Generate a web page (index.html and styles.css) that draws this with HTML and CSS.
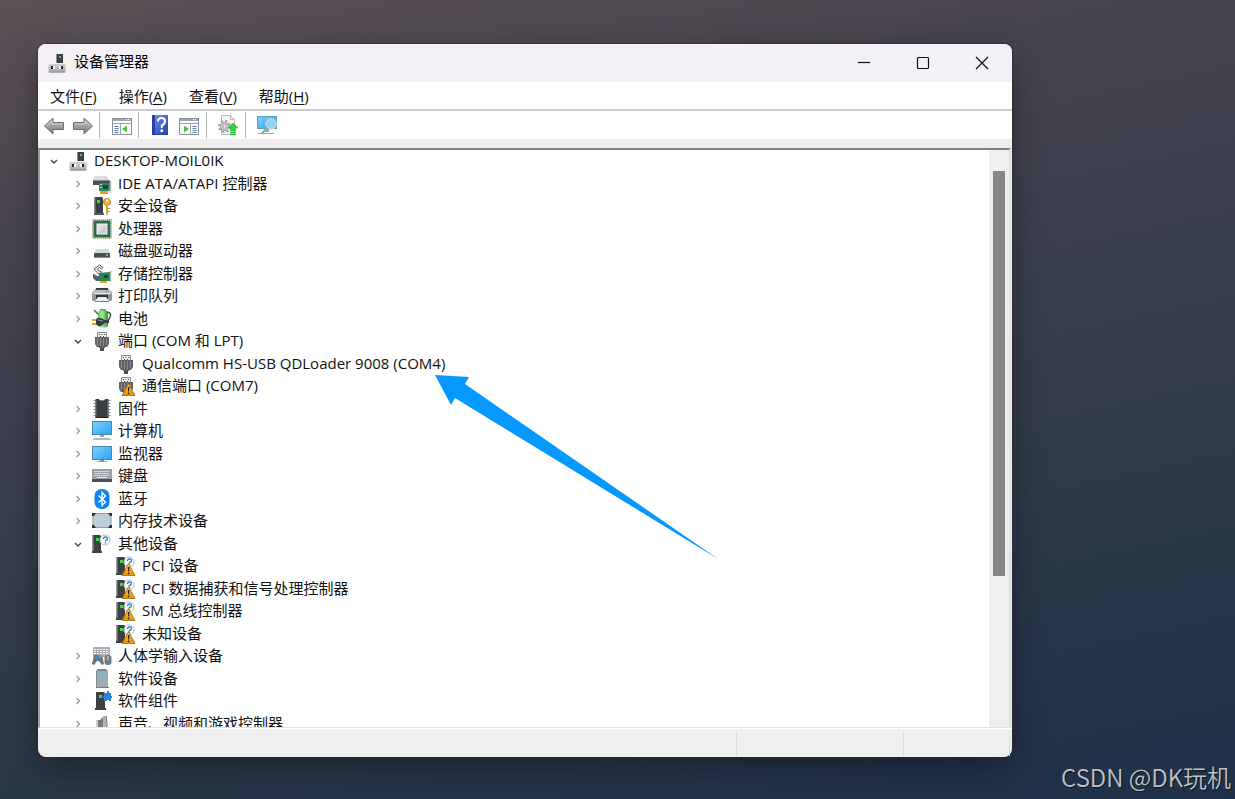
FILE: index.html
```html
<!DOCTYPE html>
<html lang="zh-CN">
<head>
<meta charset="utf-8">
<meta name="viewport" content="width=device-width, initial-scale=1">
<title>设备管理器</title>
<link rel="stylesheet" href="styles.css">
</head>
<body>
<svg class="sprite" aria-hidden="true">
  <defs>
    <linearGradient id="g-steel" x1="0" y1="0" x2="0" y2="1"><stop offset="0" stop-color="#d6d8da"/><stop offset="1" stop-color="#a3a7aa"/></linearGradient>
    <linearGradient id="g-arrow" x1="0" y1="0" x2="0" y2="1"><stop offset="0" stop-color="#c4c4c4"/><stop offset="1" stop-color="#7d7d7d"/></linearGradient>
    <linearGradient id="g-screen" x1="0" y1="0" x2="1" y2="1"><stop offset="0" stop-color="#7fd0fb"/><stop offset="1" stop-color="#2ea3f2"/></linearGradient>
    <linearGradient id="g-help" x1="0" y1="0" x2="1" y2="1"><stop offset="0" stop-color="#6b8ae6"/><stop offset="1" stop-color="#2440ae"/></linearGradient>
    <linearGradient id="g-warn" x1="0" y1="0" x2="0" y2="1"><stop offset="0" stop-color="#ffc94a"/><stop offset="1" stop-color="#e58e08"/></linearGradient>
    <linearGradient id="g-cell" x1="0" y1="0" x2="1" y2="0"><stop offset="0" stop-color="#4fcb55"/><stop offset=".4" stop-color="#a8ed9d"/><stop offset="1" stop-color="#27932f"/></linearGradient>
  </defs>
  <symbol id="right" viewBox="0 0 16 16"><path d="M6.500 5l3 3-3 3" fill="none" stroke="#9a9a9a" stroke-width="1.300"/></symbol>
  <symbol id="down" viewBox="0 0 16 16"><path d="M5 7l3 3 3-3" fill="none" stroke="#444" stroke-width="1.400"/></symbol>
  <symbol id="pc" viewBox="0 0 20 20">
    <path d="M9 1h1v10H9z" fill="#8a8e90"/><path d="M10 1h6v10h-6z" fill="#3d4144"/><rect x="12" y="3" width="2" height="2" fill="#3bdc4a"/>
    <path d="M3 10h14l1.500 2v7.500H1.500V12z" fill="url(#g-steel)"/><path d="M2 18.500h16v1H2z" fill="#8d9093"/><path d="M3 10.500h14" stroke="#efefef"/>
    <rect x="4" y="13" width="2" height="3" fill="#222"/><rect x="14" y="13" width="2" height="3" fill="#222"/><rect x="6" y="13" width="2" height="3" fill="#fff"/><rect x="12" y="13" width="2" height="3" fill="#fff"/>
  </symbol>
  <symbol id="ide" viewBox="0 0 20 20">
    <path d="M3 2h12l2 4H1z" fill="#d9dbdc"/><path d="M1 6h17v5H1z" fill="#4b4f52"/><path d="M1 6h17v1H1z" fill="#8c9092"/>
    <path d="M7 9h11v8H7z" fill="#2c8a5c"/><path d="M18.500 7v12" stroke="#b9bdbf" stroke-width="1.500"/><rect x="11" y="11" width="5" height="4" fill="#17482f"/><path d="M8 10h2v1H8zm0 3h2v1H8z" fill="#9be0b5"/><rect x="8" y="17" width="8" height="3" fill="#f29b18"/>
  </symbol>
  <symbol id="security" viewBox="0 0 20 20">
    <path d="M3 1h7l1 1v15H3z" fill="#3d4144"/><path d="M2 1h1.500v16H2z" fill="#8c8c8c"/><rect x="5" y="4" width="3" height="3" fill="#38df44"/><path d="M2 17h10v2H2z" fill="#55595b"/>
    <circle cx="15" cy="6" r="3.500" fill="#edb54b" stroke="#c08627"/><circle cx="15" cy="4.500" r="1" fill="#fff"/><path d="M14 9h2v9l-1 1-1-1z" fill="#d99e35"/><path d="M16 12h2v1h-2zm0 3h2v1h-2z" fill="#d99e35"/>
  </symbol>
  <symbol id="cpu" viewBox="0 0 20 20">
    <rect x=".75" y=".75" width="18.500" height="18.500" fill="none" stroke="#a98a3c" stroke-width="1.500" stroke-dasharray="1 1"/><rect x="1.500" y="1.500" width="17" height="17" fill="#2f6a4f"/><rect x="5" y="5" width="10" height="10" fill="#e0e2e1"/><path d="M15 5v10H5z" fill="#cdd0cf"/><rect x="5" y="5" width="10" height="10" fill="none" stroke="#f5f5f5"/>
  </symbol>
  <symbol id="disk" viewBox="0 0 20 20">
    <path d="M4 8h12l2 4H2z" fill="#d6d8d9"/><rect x="2" y="12" width="16" height="5" rx="1" fill="#4b4f51"/><path d="M2 16h16v1H2z" fill="#8c9092"/><rect x="14" y="13" width="2" height="2" fill="#3ce348"/>
  </symbol>
  <symbol id="storage" viewBox="0 0 20 20">
    <path d="M11 3.500L7.500 1 2 5l4 4.500h3V7H6.500L5.500 5l2-1.500L9.500 5z" fill="#f1f2f2" stroke="#5a5e61"/><path d="M1 10h6l4 2v5H4l-3-3z" fill="#4d6067"/><path d="M2 10h5l3 2H4z" fill="#dfe2e3"/>
    <path d="M7 9l11-1v9H7z" fill="#278650"/><path d="M18.500 7v11" stroke="#aaafb1" stroke-width="1.500"/><rect x="12" y="11" width="4" height="3" fill="#17482f"/><path d="M8 17h7v2H8z" fill="#eda11c"/>
  </symbol>
  <symbol id="printer" viewBox="0 0 20 20">
    <path d="M4 2h12l1 3H3z" fill="#3a3f43"/><path d="M2 4h16l2 3v7l-1 1H1l-1-1V7z" fill="#8f979d"/><path d="M2 4h16l1 3H1z" fill="#b9bfc4"/><path d="M1 7h18v1H1z" fill="#e3e7e9"/><rect x="13" y="5" width="4" height="1" fill="#35dc45"/><path d="M4 9h12v4H4z" fill="#2d3135"/><path d="M6 11h8l3 4H3z" fill="#eef1f2"/><path d="M3 15h14v1H3z" fill="#777e83"/>
  </symbol>
  <symbol id="battery" viewBox="0 0 20 20">
    <path d="M2 1l4 4h3" fill="none" stroke="#666" stroke-width="1.500"/><rect x="8" y="0" width="6" height="2" fill="#8c9092"/><rect x="6" y="1.500" width="10" height="17" rx="3" fill="url(#g-cell)"/><path d="M15 3q5 1 3 5l-3 6" fill="none" stroke="#454749" stroke-width="1.500"/>
    <path d="M0 10h5v2H0zm0 4h5v2H0z" fill="#dba71b"/><path d="M5 9h4l4 2h4v3h-4l-4 3H6l-2-2v-4z" fill="#3a3d40"/><path d="M6 11l5 1" stroke="#999"/>
  </symbol>
  <symbol id="port" viewBox="0 0 20 20">
    <path d="M5.500 1.500h9V7h-9z" fill="#f0f0f0" stroke="#8a8a8a"/><path d="M7 3h1v1H7zm2.500 0h1v1h-1zM12 3h1v1h-1zM8 5h1v1H8zm3 0h1v1h-1z" fill="#444"/><path d="M3 6h14v7l-2 3h-2v1H7v-1H5l-2-3z" fill="#606263"/><path d="M5.500 7v7M8.500 7v8M11.500 7v8M14.500 7v7" stroke="#898b8c"/><path d="M8 17h4v3H8z" fill="#4a4c4d"/>
  </symbol>
  <symbol id="warn" viewBox="0 0 20 20"><path d="M12.500 7.500l6.500 12H6z" fill="url(#g-warn)" stroke="#a86808" stroke-width=".8"/><path d="M11.800 11h1.600l-.3 4.500h-1z" fill="#222"/><circle cx="12.600" cy="17.300" r=".9" fill="#222"/></symbol>
  <symbol id="firmware" viewBox="0 0 20 20">
    <path d="M1.500 1.500h17M1.500 4.500h17M1.500 7.500h17M1.500 10.500h17M1.500 13.500h17M1.500 16.500h17" stroke="#85898c"/><path d="M3.500 0H7l1 2h4l1-2h3.500v19h-13z" fill="#3a3e41"/><path d="M4 1v17M16 1v17" stroke="#707477"/><path d="M3.500 18h13v1h-13z" fill="#222"/>
  </symbol>
  <symbol id="computer" viewBox="0 0 20 20">
    <rect x=".5" y=".5" width="19" height="13" fill="url(#g-screen)" stroke="#4688ad"/><path d="M8 14h4v2H8z" fill="#8fa6b3"/><path d="M3 17h14l3 2H0z" fill="#aeb9c3"/>
  </symbol>
  <symbol id="monitor" viewBox="0 0 20 20">
    <rect x=".5" y="2.500" width="19" height="13" fill="url(#g-screen)" stroke="#4688ad"/><path d="M8 16h4v1H8z" fill="#7f929e"/><path d="M5 17h10v1H5z" fill="#8fa0ab"/>
  </symbol>
  <symbol id="keyboard" viewBox="0 0 20 20">
    <rect y="3" width="20" height="10" fill="#9ba0a6"/><path d="M2 5.500h16M3 7.500h14M2 9.500h16" stroke="#eceef0" stroke-dasharray="1.500 .8"/><path d="M5 11h10v1H5z" fill="#e5e7e9"/><path d="M0 13h20v3H0z" fill="#4b5056"/>
  </symbol>
  <symbol id="bluetooth" viewBox="0 0 20 20">
    <rect x="2.500" y="0" width="15" height="20" rx="7" fill="#0a84f5"/><path d="M6.500 6.500l7 6.500-3.500 3.500V3.500L13.500 7l-7 6.500" fill="none" stroke="#fff" stroke-width="1.400"/>
  </symbol>
  <symbol id="memory" viewBox="0 0 20 20">
    <rect x="1" y="2.500" width="18" height="14" rx="1" fill="#bccfda" stroke="#8f9aa1"/><path d="M0 2h4L2 5H0zm20 0h-4l2 3h2zM0 17h4l-2-3H0zm20 0h-4l2-3h2z" fill="#333"/>
  </symbol>
  <symbol id="other" viewBox="0 0 20 20">
    <path d="M1 1h7l1 1v15H1z" fill="#3d4144"/><path d="M0 1h1.500v16H0z" fill="#9a9a9a"/><rect x="4" y="4" width="3" height="3" fill="#38df44"/><path d="M0 17h10v2H0z" fill="#3e4244"/>
    <circle cx="13" cy="6" r="5" fill="#fff" stroke="#b5bcc0"/><path d="M11.500 5q0-2 2-2t2 1.500-2 2V7.500" fill="none" stroke="#2385d0" stroke-width="1.300"/><circle cx="13.500" cy="9" r=".8" fill="#2385d0"/>
  </symbol>
  <symbol id="hid" viewBox="0 0 20 20">
    <rect x="1" y="1" width="17" height="10" fill="#aab0b6"/><path d="M2 3.500h15M2 5.500h15M2 7.500h15" stroke="#f2f4f5" stroke-dasharray="2 1"/><path d="M2 9h8l2 9-2 1-3-4H5l-3 4-2-1z" fill="#6b7379"/><circle cx="4.500" cy="11" r="2" fill="#258ddf"/><circle cx="8.500" cy="10" r="1.500" fill="#d79353"/><rect x="12.500" y="9" width="7" height="10" rx="3" fill="#737a80"/><path d="M16 10v4" stroke="#eef"/>
  </symbol>
  <symbol id="soft" viewBox="0 0 20 20">
    <path d="M6 0h8l2 2v17H4V2z" fill="#7e898f"/><path d="M5 2h11v16H5z" fill="#a0aab0"/><circle cx="10" cy="7" r="2" fill="#38d4ec"/><path d="M4 18h13v1H4z" fill="#6f7a80"/>
  </symbol>
  <symbol id="component" viewBox="0 0 20 20">
    <path d="M4 1h8l1 1v15H4z" fill="#3d4144"/><rect x="7" y="4" width="3" height="3" fill="#38df44"/><path d="M3 17h11v2H3z" fill="#3e4244"/><path d="M12 2h3V0h2v2h2v3h1v2h-1v3h-2V9h-2v1h-3V7h-1V5h1z" fill="#2687d6"/>
  </symbol>
  <symbol id="sound" viewBox="0 0 20 20">
    <path d="M4 6h4l4-4v17l-4-4H4z" fill="#757b80"/><path d="M4 6h2v9H4z" fill="#c8cdd0"/><path d="M11 2h3v17h-3z" fill="#b1b6ba"/><path d="M14 2q2 8 0 17" fill="none" stroke="#5e6367"/>
  </symbol>
  <symbol id="t-back" viewBox="0 0 22 22"><path d="M1.500 11L10 3v4.500h10.500v7H10V19z" fill="url(#g-arrow)" stroke="#6c6c6c"/><path d="M4 11l5-5v3h10" fill="none" stroke="#d5d5d5"/></symbol>
  <symbol id="t-forward" viewBox="0 0 22 22"><path d="M20.500 11L12 3v4.500H1.500v7H12V19z" fill="url(#g-arrow)" stroke="#6c6c6c"/><path d="M3 9h10V6l5 5" fill="none" stroke="#d5d5d5"/></symbol>
  <symbol id="t-tree" viewBox="0 0 22 22"><rect x="1.500" y="3.500" width="19" height="16" fill="#fafafa" stroke="#8b9095"/><path d="M2 4h18v2H2z" fill="#9fa7b0"/><path d="M15 4.500h4" stroke="#fff" stroke-dasharray="1 1"/><path d="M2 8.500h18M9.500 9v10" stroke="#9da3a8"/><path d="M3.500 11.500h4M3.500 13.500h4M3.500 15.500h4M3.500 17.500h4" stroke="#5a7fb4"/><path d="M16 10.500v7L11 14z" fill="#4cc23a"/></symbol>
  <symbol id="t-help" viewBox="0 0 22 22"><rect x="2" y="0" width="16" height="20" fill="#2541a8"/><path d="M5 0h13v19H5z" fill="url(#g-help)"/><path d="M8 6.500Q8 3 11.500 3T15 6t-3.200 4.500V13" fill="none" stroke="#fff" stroke-width="2"/><rect x="10.500" y="14.500" width="2.500" height="2.500" fill="#fff"/></symbol>
  <symbol id="t-action" viewBox="0 0 22 22"><rect x=".5" y="3.500" width="19" height="16" fill="#fafafa" stroke="#8b9095"/><path d="M1 4h18v2H1z" fill="#9fa7b0"/><path d="M14 4.500h4" stroke="#fff" stroke-dasharray="1 1"/><path d="M1 8.500h18M11.500 9v10" stroke="#9da3a8"/><path d="M13.500 11.500h4M13.500 13.500h4M13.500 15.500h4M13.500 17.500h4" stroke="#5a7fb4"/><path d="M5 10.500v7l5-3.500z" fill="#4cc23a"/></symbol>
  <symbol id="t-update" viewBox="0 0 22 22"><path d="M3.500.5h9l4 4v15h-13z" fill="#f5f5f5" stroke="#bcbcbc"/><path d="M12.500.5v4h4" fill="none" stroke="#bcbcbc"/><circle cx="6.500" cy="11.500" r="5.500" fill="none" stroke="#9b9fa3" stroke-width="2" stroke-dasharray="2.300 2"/><circle cx="6.500" cy="11.500" r="4" fill="#d4d7da" stroke="#8e9296"/><circle cx="6.500" cy="11.500" r="1.700" fill="#fff" stroke="#8e9296"/><path d="M15 8l5 5h-2.500v3h-5v-3H10zM12.500 17h5v1h-5zM12.500 19h5v1h-5z" fill="#2fd137" stroke="#26a82c" stroke-width=".5"/></symbol>
  <symbol id="t-scan" viewBox="0 0 22 22"><rect x=".5" y="1.500" width="19" height="12" fill="url(#g-screen)" stroke="#5a9fc4"/><path d="M8 14h4v3H8zM1 18h16v1H1z" fill="#8fa3b0"/><circle cx="14" cy="9" r="5" fill="#8fd2f7" stroke="#c8d4dc" stroke-width="1.500"/><path d="M10.500 13L5 18" stroke="#8fa3b0" stroke-width="2"/></symbol>
</svg>

<main class="window">
  <header class="titlebar">
    <svg class="icon"><use href="#pc"/></svg>
    <h1 class="title">设备管理器</h1>
    <div class="controls">
      <button class="control" aria-label="最小化"><svg class="glyph" viewBox="0 0 14 14"><path d="M1 6.500h12"/></svg></button>
      <button class="control" aria-label="最大化"><svg class="glyph" viewBox="0 0 14 14"><rect x="1.500" y="1.500" width="11" height="11" rx="1"/></svg></button>
      <button class="control" aria-label="关闭"><svg class="glyph" viewBox="0 0 14 14"><path d="M1 1l12 12M13 1L1 13"/></svg></button>
    </div>
  </header>
  <nav class="menubar">
    <button class="menu">文件(<u>F</u>)</button>
    <button class="menu">操作(<u>A</u>)</button>
    <button class="menu">查看(<u>V</u>)</button>
    <button class="menu">帮助(<u>H</u>)</button>
  </nav>
  <div class="toolbar" role="toolbar">
    <div class="group">
      <button class="tool" aria-label="后退"><svg><use href="#t-back"/></svg></button>
      <button class="tool" aria-label="前进"><svg><use href="#t-forward"/></svg></button>
    </div>
    <div class="group">
      <button class="tool" aria-label="显示/隐藏控制台树"><svg><use href="#t-tree"/></svg></button>
    </div>
    <div class="group">
      <button class="tool" aria-label="帮助"><svg><use href="#t-help"/></svg></button>
      <button class="tool" aria-label="显示/隐藏操作窗格"><svg><use href="#t-action"/></svg></button>
    </div>
    <div class="group">
      <button class="tool" aria-label="更新驱动程序"><svg><use href="#t-update"/></svg></button>
    </div>
    <div class="group">
      <button class="tool" aria-label="扫描检测硬件改动"><svg><use href="#t-scan"/></svg></button>
    </div>
  </div>
  <section class="pane">
    <ul class="tree" role="tree">
      <li class="node root" role="treeitem" aria-level="1"><svg class="chevron"><use href="#down"/></svg><svg class="icon"><use href="#pc"/></svg><span class="label">DESKTOP-MOIL0IK</span></li>
      <li class="node" role="treeitem" aria-level="2"><svg class="chevron"><use href="#right"/></svg><svg class="icon"><use href="#ide"/></svg><span class="label">IDE ATA/ATAPI 控制器</span></li>
      <li class="node" role="treeitem" aria-level="2"><svg class="chevron"><use href="#right"/></svg><svg class="icon"><use href="#security"/></svg><span class="label">安全设备</span></li>
      <li class="node" role="treeitem" aria-level="2"><svg class="chevron"><use href="#right"/></svg><svg class="icon"><use href="#cpu"/></svg><span class="label">处理器</span></li>
      <li class="node" role="treeitem" aria-level="2"><svg class="chevron"><use href="#right"/></svg><svg class="icon"><use href="#disk"/></svg><span class="label">磁盘驱动器</span></li>
      <li class="node" role="treeitem" aria-level="2"><svg class="chevron"><use href="#right"/></svg><svg class="icon"><use href="#storage"/></svg><span class="label">存储控制器</span></li>
      <li class="node" role="treeitem" aria-level="2"><svg class="chevron"><use href="#right"/></svg><svg class="icon"><use href="#printer"/></svg><span class="label">打印队列</span></li>
      <li class="node" role="treeitem" aria-level="2"><svg class="chevron"><use href="#right"/></svg><svg class="icon"><use href="#battery"/></svg><span class="label">电池</span></li>
      <li class="node" role="treeitem" aria-level="2"><svg class="chevron"><use href="#down"/></svg><svg class="icon"><use href="#port"/></svg><span class="label">端口 (COM 和 LPT)</span></li>
      <li class="node leaf" role="treeitem" aria-level="3"><svg class="icon"><use href="#port"/></svg><span class="label">Qualcomm HS-USB QDLoader 9008 (COM4)</span></li>
      <li class="node leaf" role="treeitem" aria-level="3"><svg class="icon"><use href="#port"/><use href="#warn"/></svg><span class="label">通信端口 (COM7)</span></li>
      <li class="node" role="treeitem" aria-level="2"><svg class="chevron"><use href="#right"/></svg><svg class="icon"><use href="#firmware"/></svg><span class="label">固件</span></li>
      <li class="node" role="treeitem" aria-level="2"><svg class="chevron"><use href="#right"/></svg><svg class="icon"><use href="#computer"/></svg><span class="label">计算机</span></li>
      <li class="node" role="treeitem" aria-level="2"><svg class="chevron"><use href="#right"/></svg><svg class="icon"><use href="#monitor"/></svg><span class="label">监视器</span></li>
      <li class="node" role="treeitem" aria-level="2"><svg class="chevron"><use href="#right"/></svg><svg class="icon"><use href="#keyboard"/></svg><span class="label">键盘</span></li>
      <li class="node" role="treeitem" aria-level="2"><svg class="chevron"><use href="#right"/></svg><svg class="icon"><use href="#bluetooth"/></svg><span class="label">蓝牙</span></li>
      <li class="node" role="treeitem" aria-level="2"><svg class="chevron"><use href="#right"/></svg><svg class="icon"><use href="#memory"/></svg><span class="label">内存技术设备</span></li>
      <li class="node" role="treeitem" aria-level="2"><svg class="chevron"><use href="#down"/></svg><svg class="icon"><use href="#other"/></svg><span class="label">其他设备</span></li>
      <li class="node leaf" role="treeitem" aria-level="3"><svg class="icon"><use href="#other"/><use href="#warn"/></svg><span class="label">PCI 设备</span></li>
      <li class="node leaf" role="treeitem" aria-level="3"><svg class="icon"><use href="#other"/><use href="#warn"/></svg><span class="label">PCI 数据捕获和信号处理控制器</span></li>
      <li class="node leaf" role="treeitem" aria-level="3"><svg class="icon"><use href="#other"/><use href="#warn"/></svg><span class="label">SM 总线控制器</span></li>
      <li class="node leaf" role="treeitem" aria-level="3"><svg class="icon"><use href="#other"/><use href="#warn"/></svg><span class="label">未知设备</span></li>
      <li class="node" role="treeitem" aria-level="2"><svg class="chevron"><use href="#right"/></svg><svg class="icon"><use href="#hid"/></svg><span class="label">人体学输入设备</span></li>
      <li class="node" role="treeitem" aria-level="2"><svg class="chevron"><use href="#right"/></svg><svg class="icon"><use href="#soft"/></svg><span class="label">软件设备</span></li>
      <li class="node" role="treeitem" aria-level="2"><svg class="chevron"><use href="#right"/></svg><svg class="icon"><use href="#component"/></svg><span class="label">软件组件</span></li>
      <li class="node" role="treeitem" aria-level="2"><svg class="chevron"><use href="#right"/></svg><svg class="icon"><use href="#sound"/></svg><span class="label">声音、视频和游戏控制器</span></li>
    </ul>
    <div class="scrollbar"><div class="thumb"></div></div>
  </section>
  <footer class="statusbar"><span class="status"></span><span class="status mid"></span><span class="status end"></span></footer>
  <svg class="pointer" viewBox="0 0 284 184" aria-hidden="true"><path d="M0 0L34 2l-4 7L283 184 20 23l-4 7z" fill="#0598ff"/></svg>
</main>
<p class="watermark">CSDN @DK玩机</p>
</body>
</html>
```
FILE: styles.css
```css
* {
  box-sizing: border-box;
}

body {
  margin: 0;
  height: 100vh;
  display: flex;
  padding: 44px 223px 42px 38px;
  overflow: hidden;
  background: linear-gradient(168deg, #5d5056 0%, #48444f 22%, #383e4c 48%, #293848 75%, #1f3148 100%);
  font-family: "Open Sans", "Noto Sans CJK SC", sans-serif;
  font-size: 15px;
  line-height: 22px;
  color: #111;
}

button {
  border: 0;
  padding: 0;
  background: none;
  font: inherit;
  color: inherit;
}

.sprite {
  position: absolute;
  width: 0;
  height: 0;
}

.window {
  position: relative;
  flex: 1;
  min-width: 0;
  display: flex;
  flex-direction: column;
  border-radius: 8px;
  background: #efefef;
  box-shadow: 0 0 1px 1px rgba(40, 40, 45, 0.5), 0 12px 34px rgba(0, 0, 0, 0.35);
}

.titlebar {
  display: flex;
  align-items: center;
  height: 38px;
  padding: 0 1px 0 9px;
  border-radius: 8px 8px 0 0;
  background: #f3f0f6;
}

.icon {
  flex: none;
  width: 20px;
  height: 20px;
}

.title {
  margin: 0;
  padding: 0 0 4px 7px;
  font-size: 15px;
  line-height: 22px;
  font-weight: 400;
  color: #000;
}

.controls {
  display: flex;
  margin-left: auto;
}

.control {
  display: grid;
  place-items: center;
  width: 59px;
  height: 38px;
}

.glyph {
  width: 14px;
  height: 14px;
  fill: none;
  stroke: #111;
  stroke-width: 1.2;
}

.menubar {
  display: flex;
  gap: 22px;
  height: 29px;
  padding: 0 12px;
  border-bottom: 2px solid #cbcbcd;
  background: #fff;
}

.menu u {
  text-underline-offset: 2px;
}

.toolbar {
  display: flex;
  align-items: center;
  height: 28px;
  padding-left: 5px;
  background: #fff;
}

.group {
  display: flex;
  align-items: center;
  gap: 7px;
  height: 26px;
  padding: 2px 5px 0 0;
}

.group + .group {
  padding-left: 11px;
  border-left: 1px solid #b4b4b4;
}

.tool,
.tool svg {
  display: block;
  width: 22px;
  height: 22px;
}

.pane {
  flex: 1;
  min-height: 0;
  display: flex;
  margin: 9px 1px 0 0;
  border: 2px solid #828282;
  border-left-color: #a0a0a0;
  border-right-color: #e3e3e3;
  border-bottom: 1px solid #e3e3e3;
  background: #fff;
}

.tree {
  flex: 1;
  display: grid;
  grid-auto-rows: 22px 23px;
  align-content: start;
  margin: 0;
  padding: 0;
  overflow: hidden;
  list-style: none;
}

.node {
  display: flex;
  align-items: center;
  padding-left: 30px;
  white-space: nowrap;
}

.root {
  padding-left: 6px;
}

.leaf {
  padding-left: 76px;
}

.chevron {
  flex: none;
  width: 16px;
  height: 16px;
  margin-right: 6px;
}

.label {
  padding: 0 0 2px 6px;
}

.scrollbar {
  width: 20px;
  padding: 21px 4px 151px;
  background: #efefef;
}

.thumb {
  height: 100%;
  background: #868686;
}

.statusbar {
  display: flex;
  height: 29px;
  padding: 2px 2px 1px 0;
  border-top: 1px solid #fff;
  border-radius: 0 0 8px 8px;
}

.status {
  flex: 1;
  border-right: 1px solid #dedede;
}

.mid {
  flex: 0 0 167px;
}

.end {
  flex: 0 0 106px;
}

.pointer {
  position: absolute;
  left: 397px;
  top: 331px;
  width: 284px;
  height: 184px;
}

.watermark {
  position: absolute;
  right: 4px;
  bottom: 4px;
  margin: 0;
  font-family: "Noto Sans CJK SC", sans-serif;
  font-size: 24px;
  font-weight: 350;
  line-height: 36px;
  color: #bcc1c8;
  text-shadow: 1px 1px 1px rgba(0, 0, 0, 0.6);
}
```
